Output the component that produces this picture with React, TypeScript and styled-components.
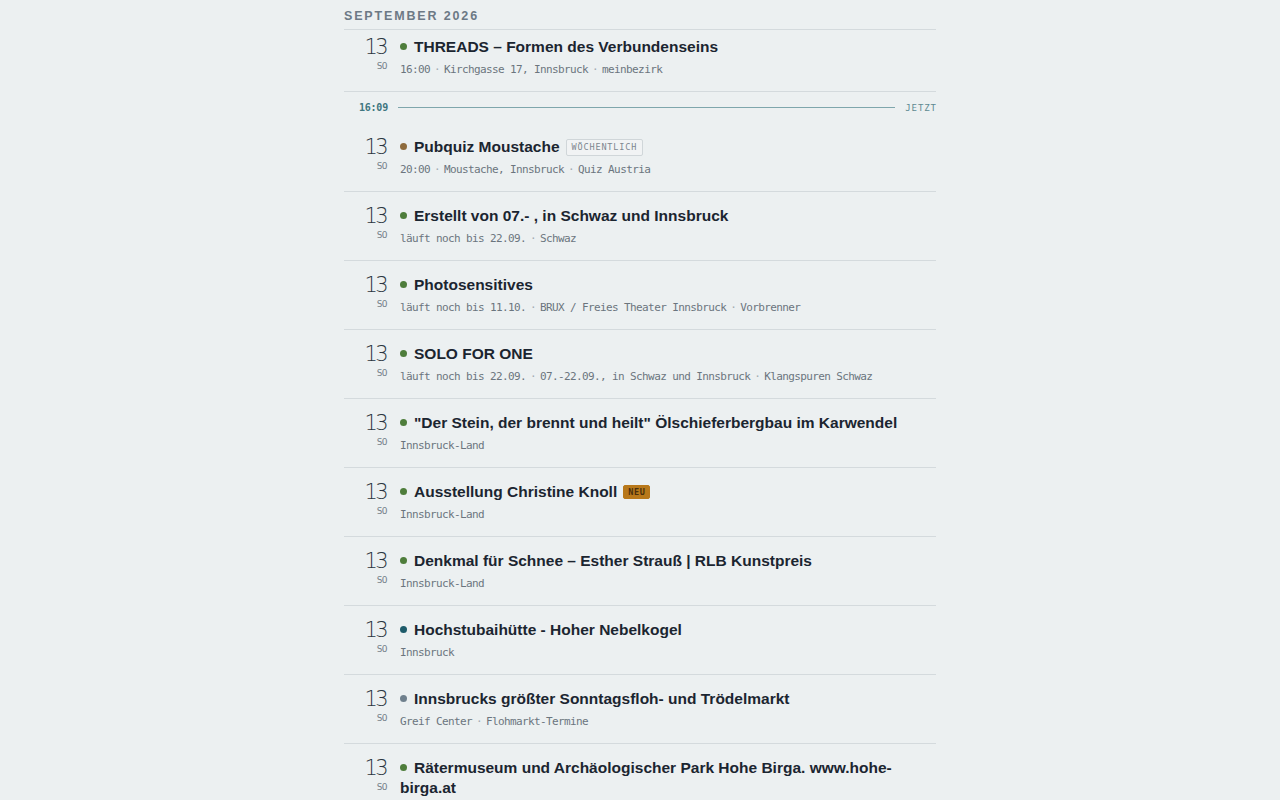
import styled, { createGlobalStyle } from "styled-components";

const GlobalStyle = createGlobalStyle`
	html, body {
		margin: 0;
		padding: 0;
		background: #ecf0f1;
	}
`;

const MONO = `"DejaVu Sans Mono", "Liberation Mono", monospace`;
const SANS = `"Liberation Sans", Arial, sans-serif`;

const Page = styled.div`
	width: 592px;
	margin: 0 auto;
	font-family: ${SANS};
`;

const MonthHeader = styled.div`
	padding: 8px 0 5px;
	line-height: 16px;
	font-size: 12.5px;
	font-weight: bold;
	letter-spacing: 1.85px;
	color: #6c7985;
	border-bottom: 1px solid #d4dadd;
`;

const Row = styled.div<{ $first?: boolean }>`
	display: grid;
	grid-template-columns: 44px 1fr;
	column-gap: 12px;
	padding: ${({ $first }) => ($first ? "7px 0 12px" : "14px 0 12px")};
	border-bottom: 1px solid #d4dadd;
`;

const DateCol = styled.div`
	display: flex;
	flex-direction: column;
	align-items: flex-end;
`;

const Day = styled.div`
	font-family: "DejaVu Sans", sans-serif;
	font-weight: 200;
	font-size: 21px;
	line-height: 20px;
	letter-spacing: -2.6px;
	color: #2b3540;
	padding-right: 2px;
`;

const Weekday = styled.div`
	font-family: ${MONO};
	font-size: 9.5px;
	line-height: 14px;
	letter-spacing: -0.6px;
	color: #76828b;
	margin-top: 2px;
	padding-right: 1px;
`;

const Content = styled.div`
	min-width: 0;
`;

const Title = styled.div`
	font-size: 15.5px;
	font-weight: bold;
	line-height: 20px;
	color: #1b2530;
`;

const Dot = styled.span<{ $color: string }>`
	display: inline-block;
	width: 7px;
	height: 7px;
	border-radius: 50%;
	background: ${({ $color }) => $color};
	margin-right: 7px;
	vertical-align: 2px;
`;

const Badge = styled.span<{ $variant: "weekly" | "new" }>`
	display: inline-block;
	margin-left: 6px;
	vertical-align: top;
	margin-top: ${({ $variant }) => ($variant === "new" ? "3px" : "2px")};
	font-family: ${MONO};
	font-weight: ${({ $variant }) => ($variant === "new" ? "bold" : "normal")};
	font-size: 8.5px;
	line-height: ${({ $variant }) => ($variant === "new" ? "12px" : "15px")};
	letter-spacing: ${({ $variant }) => ($variant === "new" ? "0.6px" : "0.85px")};
	padding: 0 ${({ $variant }) => ($variant === "new" ? "4px" : "5px")};
	border-radius: 2px;
	color: ${({ $variant }) => ($variant === "new" ? "#4a2f0c" : "#7d878f")};
	background: ${({ $variant }) => ($variant === "new" ? "#b8781a" : "#f1f3f4")};
	border: 1px solid ${({ $variant }) => ($variant === "new" ? "#b8781a" : "#d0d6d9")};
`;

const Meta = styled.div`
	margin-top: 4px;
	font-family: ${MONO};
	font-size: 11px;
	line-height: 18px;
	letter-spacing: -0.62px;
	color: #6b757e;
	white-space: nowrap;
`;

const Sep = styled.span`
	color: #a3acb2;
	margin: 0 4px;
`;

const NowRow = styled.div`
	display: grid;
	grid-template-columns: 44px 1fr auto;
	align-items: center;
	column-gap: 10px;
	height: 31px;
	font-family: ${MONO};
`;

const NowTime = styled.div`
	text-align: right;
	font-size: 10px;
	font-weight: bold;
	letter-spacing: -0.2px;
	color: #3f7680;
`;

const NowLine = styled.div`
	height: 1px;
	background: #7fa6ac;
`;

const NowLabel = styled.div`
	font-size: 9px;
	letter-spacing: 0.9px;
	color: #5f8a91;
	margin-right: -0.9px;
`;

type Event = {
	title: string;
	meta: string[];
	color: string;
	badge?: "weekly" | "new";
};

const GREEN = "#4e7d3b";

const past: Event = {
	title: "THREADS – Formen des Verbundenseins",
	meta: ["16:00", "Kirchgasse 17, Innsbruck", "meinbezirk"],
	color: GREEN,
};

const events: Event[] = [
	{
		title: "Pubquiz Moustache",
		meta: ["20:00", "Moustache, Innsbruck", "Quiz Austria"],
		color: "#8e6b3d",
		badge: "weekly",
	},
	{
		title: "Erstellt von 07.- , in Schwaz und Innsbruck",
		meta: ["läuft noch bis 22.09.", "Schwaz"],
		color: GREEN,
	},
	{
		title: "Photosensitives",
		meta: ["läuft noch bis 11.10.", "BRUX / Freies Theater Innsbruck", "Vorbrenner"],
		color: GREEN,
	},
	{
		title: "SOLO FOR ONE",
		meta: ["läuft noch bis 22.09.", "07.-22.09., in Schwaz und Innsbruck", "Klangspuren Schwaz"],
		color: GREEN,
	},
	{
		title: "\"Der Stein, der brennt und heilt\" Ölschieferbergbau im Karwendel",
		meta: ["Innsbruck-Land"],
		color: GREEN,
	},
	{
		title: "Ausstellung Christine Knoll",
		meta: ["Innsbruck-Land"],
		color: GREEN,
		badge: "new",
	},
	{
		title: "Denkmal für Schnee – Esther Strauß | RLB Kunstpreis",
		meta: ["Innsbruck-Land"],
		color: GREEN,
	},
	{
		title: "Hochstubaihütte - Hoher Nebelkogel",
		meta: ["Innsbruck"],
		color: "#1d5b6a",
	},
	{
		title: "Innsbrucks größter Sonntagsfloh- und Trödelmarkt",
		meta: ["Greif Center", "Flohmarkt-Termine"],
		color: "#6f808d",
	},
	{
		title: "Rätermuseum und Archäologischer Park Hohe Birga. www.hohe-birga.at",
		meta: ["Innsbruck"],
		color: GREEN,
	},
];

const EventRow = ({ event, first }: { event: Event; first?: boolean }) => (
	<Row $first={first}>
		<DateCol>
			<Day>13</Day>
			<Weekday>SO</Weekday>
		</DateCol>
		<Content>
			<Title>
				<Dot $color={event.color} />
				{event.title}
				{event.badge && (
					<Badge $variant={event.badge}>
						{event.badge === "new" ? "NEU" : "WÖCHENTLICH"}
					</Badge>
				)}
			</Title>
			<Meta>
				{event.meta.map((part, i) => (
					<span key={i}>
						{i > 0 && <Sep>·</Sep>}
						{part}
					</span>
				))}
			</Meta>
		</Content>
	</Row>
);

export default function App() {
	return (
		<>
			<GlobalStyle />
			<Page>
				<MonthHeader>SEPTEMBER 2026</MonthHeader>
				<EventRow event={past} first />
				<NowRow>
					<NowTime>16:09</NowTime>
					<NowLine />
					<NowLabel>JETZT</NowLabel>
				</NowRow>
				{events.map((e, i) => (
					<EventRow key={i} event={e} />
				))}
			</Page>
		</>
	);
}
